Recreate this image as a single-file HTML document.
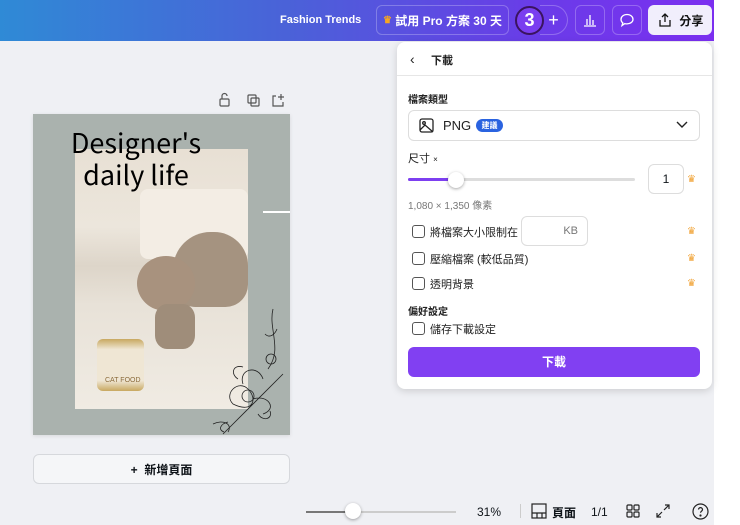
<!DOCTYPE html>
<html><head><meta charset="utf-8"><style>
*{box-sizing:border-box;margin:0;padding:0}
body{width:740px;height:525px;overflow:hidden;background:#fff;font-family:"Liberation Sans","Noto Sans CJK TC",sans-serif;position:relative;color:#0e1318}
.abs{position:absolute}
#hdr{left:0;top:0;width:714px;height:41px;background:linear-gradient(90deg,#2f8ad6 0%,#4a62d8 40%,#6a3ce8 75%,#7b2ff0 100%)}
#bg{left:0;top:41px;width:714px;height:484px;background:#eff0f4}
.hb{position:absolute;top:5px;height:30px;border:1px solid rgba(255,255,255,.25);border-radius:6px;color:#fff;font-weight:bold;font-size:12px;display:flex;align-items:center;justify-content:center}
.crown{color:#f5a623;font-size:10px}
#panel{left:397px;top:42px;width:315px;height:347px;background:#fff;border-radius:8px;box-shadow:0 2px 8px rgba(0,0,0,.15)}
.t{position:absolute;font-size:11px;color:#222}
.cb{position:absolute;width:13px;height:13px;border:1.5px solid #555;border-radius:3px}
.cr{position:absolute;right:16px;color:#f0a030;font-size:10px}
</style></head><body>
<div id="hdr" class="abs"></div>
<div id="bg" class="abs"></div>
<div class="abs" style="left:280px;top:14px;color:#fff;font-weight:bold;font-size:11px">Fashion Trends</div>
<div class="hb" style="left:376px;width:133px"><span class="crown">♛</span>&nbsp;試用 Pro 方案 30 天</div>
<div class="abs" style="left:515px;top:6px;width:29px;height:29px;border-radius:50%;background:#7a3ef0;border:2px solid #3a1460;color:#fff;font-weight:bold;font-size:18px;text-align:center;line-height:25px;z-index:2">3</div>
<div class="hb" style="left:540px;width:28px;border-radius:0 15px 15px 0;border-left:none;font-size:18px;font-weight:normal">+</div>
<div class="hb" style="left:575px;width:30px"><svg width="16" height="16" viewBox="0 0 16 16" fill="none" stroke="#fff" stroke-width="1.3"><path d="M2 14h12M5 13V7M8 13V3M11 13V8"/></svg></div>
<div class="hb" style="left:612px;width:30px"><svg width="16" height="16" viewBox="0 0 16 16" fill="none" stroke="#fff" stroke-width="1.3"><path d="M8 2.5c3.3 0 6 2 6 4.7s-2.7 4.7-6 4.7c-.8 0-1.5-.1-2.2-.3L3 13.5l.8-2.6C2.7 10 2 8.7 2 7.2 2 4.5 4.7 2.5 8 2.5z"/></svg></div>
<div class="hb" style="left:648px;width:64px;background:#f1eefc;color:#111;border:none"><svg width="16" height="16" viewBox="0 0 16 16" fill="none" stroke="#111" stroke-width="1.3"><path d="M8 10V2M5 5l3-3 3 3M3 8v6h10V8"/></svg>&nbsp;&nbsp;分享</div>
<svg class="abs" style="left:218px;top:92px" width="80" height="16" fill="none" stroke="#555" stroke-width="1.2"><rect x="2" y="7" width="9" height="7" rx="1"/><path d="M4 7V4a2.5 2.5 0 015 0"/><rect x="30" y="3" width="8" height="8" rx="1"/><rect x="33" y="6" width="8" height="8" rx="1"/><path d="M58 4h-3v10h10v-4M63 2v6M60 5h6"/></svg>
<div class="abs" style="left:33px;top:114px;width:257px;height:321px;background:#aab2ae;box-shadow:0 1px 4px rgba(0,0,0,.1);overflow:hidden">
 <div class="abs" style="left:42px;top:35px;width:173px;height:260px;background:linear-gradient(180deg,#e8e0d4 0%,#ece6dc 30%,#ddd5c9 45%,#e8e2d8 60%,#f0ebe3 100%)"></div>
 <div class="abs" style="left:107px;top:75px;width:108px;height:70px;background:#f3ede4;border-radius:8px"></div>
 <div class="abs" style="left:140px;top:118px;width:75px;height:75px;border-radius:50% 45% 30% 30%;background:#a59380"></div>
 <div class="abs" style="left:104px;top:142px;width:58px;height:55px;border-radius:50%;background:#a8927e"></div>
 <div class="abs" style="left:122px;top:190px;width:40px;height:45px;border-radius:30%;background:#9f8d7a"></div>
 <div class="abs" style="left:64px;top:225px;width:47px;height:52px;border-radius:6px;background:linear-gradient(#c8a860,#efe6d4 20%,#efe6d4 80%,#c8a860)"></div>
 <div class="abs" style="left:72px;top:263px;font-size:7px;color:#8a6a3a">CAT FOOD</div>
 <div class="abs" style="left:230px;top:97px;width:27px;height:1.5px;background:#fff"></div>
 <svg class="abs" style="left:170px;top:190px" width="90" height="131" fill="none" stroke="#222" stroke-width=".8"><path d="M70 5c-5 20 10 40-5 60M62 30c5 5 10 0 12-5M20 130c20-20 40-40 60-60M30 100c-10-10 5-25 15-15s5 25-15 15zM40 80c-5-15 15-20 20-5M50 95c15-5 25 10 10 15M10 120c10-5 20 0 15 8"/><circle cx="45" cy="92" r="6"/><circle cx="68" cy="55" r="5"/><path d="M35 75c-8-5-5-15 5-12M55 110c5 8 15 5 12-3M25 118c-8 2-10 8-4 10"/></svg>
 <div class="abs" style="left:0;top:12px;width:206px;text-align:center;font-family:'Noto Sans CJK JP',sans-serif;font-size:27px;line-height:32px;color:#000">Designer's<br>daily life</div>
</div>
<div class="abs" style="left:33px;top:454px;width:257px;height:30px;border:1px solid #d6d8dc;border-radius:6px;background:#f5f6f8;font-size:12px;font-weight:bold;display:flex;align-items:center;justify-content:center">+&nbsp;&nbsp;新增頁面</div>
<div class="abs" style="left:306px;top:511px;width:150px;height:2px;background:#ccc"></div>
<div class="abs" style="left:306px;top:511px;width:46px;height:2px;background:#777"></div>
<div class="abs" style="left:345px;top:503px;width:16px;height:16px;border-radius:50%;background:#fff;box-shadow:0 1px 3px rgba(0,0,0,.35)"></div>
<div class="abs" style="left:477px;top:505px;font-size:12px">31%</div>
<div class="abs" style="left:520px;top:504px;width:1px;height:14px;background:#ccc"></div>
<svg class="abs" style="left:531px;top:503px" width="16" height="16" fill="none" stroke="#222" stroke-width="1.2"><rect x="1" y="1" width="14" height="14"/><path d="M1 10h14M6 10v5M11 10v5"/></svg>
<div class="abs" style="left:552px;top:504px;font-size:12px;font-weight:bold">頁面</div>
<div class="abs" style="left:591px;top:505px;font-size:12px">1/1</div>
<svg class="abs" style="left:626px;top:504px" width="14" height="14" fill="none" stroke="#222" stroke-width="1.2"><rect x="1" y="1" width="5" height="5" rx="1"/><rect x="8" y="1" width="5" height="5" rx="1"/><rect x="1" y="8" width="5" height="5" rx="1"/><rect x="8" y="8" width="5" height="5" rx="1"/></svg>
<svg class="abs" style="left:656px;top:504px" width="14" height="14" fill="none" stroke="#222" stroke-width="1.2"><path d="M8 6l5-5M9 1h4v4M6 8l-5 5M1 9v4h4"/></svg>
<svg class="abs" style="left:692px;top:503px" width="17" height="17" fill="none" stroke="#222" stroke-width="1.2"><circle cx="8.5" cy="8.5" r="7.5"/><path d="M6.5 6.5a2 2 0 114 .3c0 1.2-2 1.5-2 3"/><circle cx="8.5" cy="12.5" r=".5" fill="#222"/></svg>
<div id="panel" class="abs">
 <div class="t" style="left:13px;top:9px;font-size:14px">‹</div>
 <div class="t" style="left:34px;top:10px;font-weight:bold">下載</div>
 <div class="abs" style="left:0;top:33px;width:315px;height:1px;background:#e6e6e6"></div>
 <div class="t" style="left:11px;top:49px;font-size:10px;font-weight:bold">檔案類型</div>
 <div class="abs" style="left:11px;top:68px;width:292px;height:31px;border:1px solid #ddd;border-radius:6px"></div>
 <svg class="abs" style="left:22px;top:76px" width="15" height="15" fill="none" stroke="#222" stroke-width="1.3"><rect x="1" y="1" width="13" height="13" rx="2"/><circle cx="5" cy="5" r="1.3"/><path d="M1 12l5-5 8 7"/></svg>
 <div class="t" style="left:46px;top:76px;font-size:13px">PNG</div>
 <div class="abs" style="left:79px;top:77px;width:27px;height:13px;border-radius:7px;background:#2a63e0;color:#fff;font-size:8px;font-weight:bold;text-align:center;line-height:13px">建議</div>
 <svg class="abs" style="left:279px;top:79px" width="12" height="8" fill="none" stroke="#222" stroke-width="1.4"><path d="M1 1l5 5 5-5"/></svg>
 <div class="t" style="left:11px;top:108px;font-size:11px">尺寸 <span style="font-size:8px">×</span></div>
 <div class="abs" style="left:11px;top:136px;width:227px;height:3px;background:#ddd;border-radius:2px"></div>
 <div class="abs" style="left:11px;top:136px;width:48px;height:3px;background:#7d3ff0;border-radius:2px"></div>
 <div class="abs" style="left:51px;top:130px;width:16px;height:16px;border-radius:50%;background:#fff;box-shadow:0 1px 3px rgba(0,0,0,.35)"></div>
 <div class="abs" style="left:251px;top:122px;width:36px;height:30px;border:1px solid #ddd;border-radius:6px;font-size:12px;text-align:center;line-height:28px">1</div>
 <div class="cr" style="top:132px">♛</div>
 <div class="t" style="left:11px;top:155px;font-size:10px;color:#777">1,080 × 1,350 像素</div>
 <div class="cb" style="left:15px;top:183px"></div><div class="t" style="left:33px;top:182px">將檔案大小限制在</div>
 <div class="abs" style="left:124px;top:174px;width:67px;height:30px;border:1px solid #ddd;border-radius:6px;font-size:11px;color:#777;text-align:right;padding-right:9px;line-height:28px">KB</div>
 <div class="cr" style="top:184px">♛</div>
 <div class="cb" style="left:15px;top:210px"></div><div class="t" style="left:33px;top:209px">壓縮檔案 (較低品質)</div><div class="cr" style="top:211px">♛</div>
 <div class="cb" style="left:15px;top:235px"></div><div class="t" style="left:33px;top:234px">透明背景</div><div class="cr" style="top:236px">♛</div>
 <div class="t" style="left:11px;top:261px;font-size:10px;font-weight:bold">偏好設定</div>
 <div class="cb" style="left:15px;top:280px"></div><div class="t" style="left:33px;top:279px">儲存下載設定</div>
 <div class="abs" style="left:11px;top:305px;width:292px;height:30px;border-radius:6px;background:#8140f2;color:#fff;font-size:12px;font-weight:bold;text-align:center;line-height:30px">下載</div>
</div>
</body></html>
